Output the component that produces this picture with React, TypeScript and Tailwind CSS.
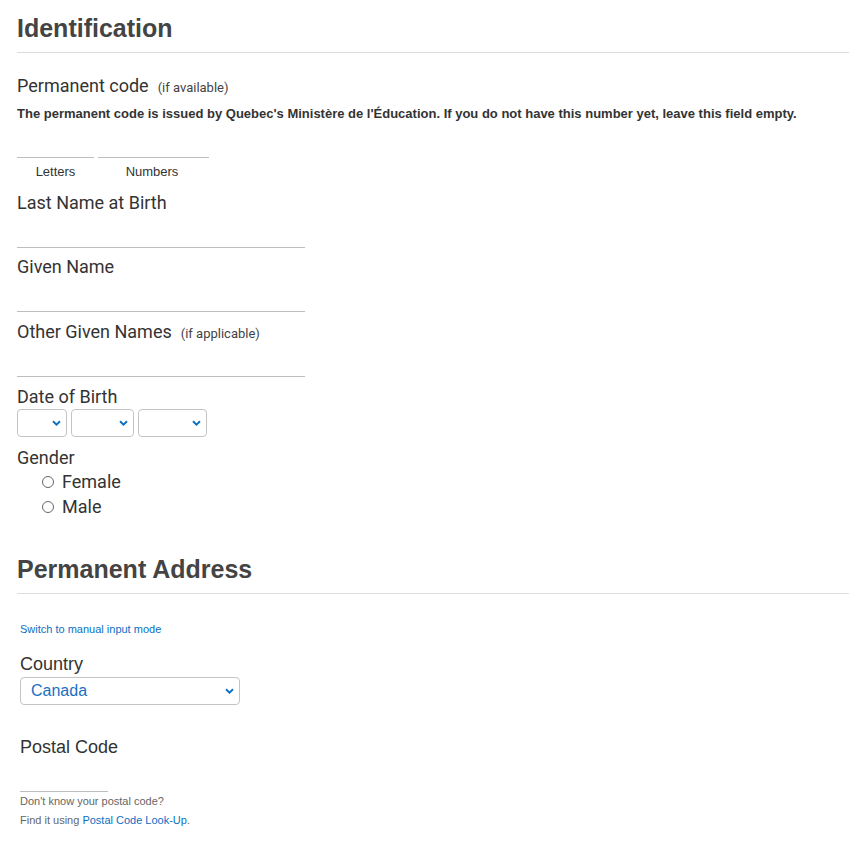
import type { ReactNode } from 'react'

const roboto = "font-['Roboto','Liberation_Sans',sans-serif]"
const arial = "font-['Liberation_Sans',Arial,sans-serif]"

function Chevron() {
    return (
        <svg width="9" height="6" viewBox="0 0 9 6" className="pointer-events-none absolute right-[5px] top-1/2 -translate-y-1/2 mr-[1px]">
            <path d="M1 1.2 L4.5 4.6 L8 1.2" fill="none" stroke="#0b6fc2" strokeWidth="1.9" />
        </svg>
    )
}

function Select({ width, children }: { width: string; children?: ReactNode }) {
    return (
        <div className={`relative ${width} h-[28px]`}>
            <select className="w-full h-full appearance-none bg-white border border-[#c4c4c4] rounded-[4px] outline-none" defaultValue="">
                {children}
            </select>
            <Chevron />
        </div>
    )
}

function Field({ label, note, gap = 'mb-[7px]' }: { label: string; note?: string; gap?: string }) {
    return (
        <div className={gap}>
            <label className={`${roboto} block h-[24px] leading-[24px] text-[18px] text-[#333]`}>
                {label}
                {note && <span className="ml-[9px] text-[13px] text-[#444]">{note}</span>}
            </label>
            <input className="block w-[288px] h-[33px] border-b border-[#bdbdbd] outline-none" />
        </div>
    )
}

function SectionTitle({ children }: { children: ReactNode }) {
    return (
        <div className="border-b border-[#dcdcdc] pb-[9px]">
            <h2 className={`${arial} h-[30px] leading-[30px] text-[25px] font-bold text-[#444]`}>{children}</h2>
        </div>
    )
}

export default function App() {
    return (
        <div className="bg-white min-h-[844px] pl-[17px] pr-[13px] pt-[13px]">
            <SectionTitle>Identification</SectionTitle>

            <div className={`${roboto} mt-[21px] h-[24px] leading-[24px] text-[18px] text-[#333]`}>
                Permanent code
                <span className="ml-[9px] text-[13px] text-[#444]">(if available)</span>
            </div>
            <p className={`${arial} mt-[7px] h-[18px] leading-[18px] text-[13px] font-bold text-[#333]`}>
                The permanent code is issued by Quebec's Ministère de l'Éducation. If you do not have this number yet, leave this field empty.
            </p>

            <div className="flex gap-[4px]">
                <div className="w-[77px]">
                    <input className="block w-full h-[35px] border-b border-[#bdbdbd] outline-none" />
                    <div className={`${arial} mt-[5px] h-[18px] leading-[18px] text-[13px] text-[#333] text-center`}>Letters</div>
                </div>
                <div className="w-[111px]">
                    <input className="block w-full h-[35px] border-b border-[#bdbdbd] outline-none" />
                    <div className={`${arial} mt-[5px] pr-[3px] h-[18px] leading-[18px] text-[13px] text-[#333] text-center`}>Numbers</div>
                </div>
            </div>

            <div className="mt-[10px]">
                <Field label="Last Name at Birth" />
                <Field label="Given Name" gap="mb-[8px]" />
                <Field label="Other Given Names" note="(if applicable)" gap="mb-[8px]" />
            </div>

            <div className={`${roboto} h-[24px] leading-[24px] text-[18px] text-[#333]`}>Date of Birth</div>
            <div className="flex gap-[4px]">
                <Select width="w-[50px]" />
                <Select width="w-[63px]" />
                <Select width="w-[69px]" />
            </div>

            <div className={`${roboto} mt-[9px] h-[23px] leading-[23px] text-[18px] text-[#333]`}>Gender</div>
            <div className={`${roboto} pl-[25px] text-[18px] text-[#333]`}>
                {['Female', 'Male'].map((g) => (
                    <label key={g} className="flex items-center h-[25px] gap-[8px]">
                        <input type="radio" name="gender" className="appearance-none w-[12px] h-[12px] rounded-full border border-[#666] bg-white" />
                        {g}
                    </label>
                ))}
            </div>

            <div className="mt-[35px]">
                <SectionTitle>Permanent Address</SectionTitle>
            </div>

            <div className="pl-[3px]">
                <a href="#" className={`${arial} block mt-[28px] h-[14px] leading-[14px] text-[11px] text-[#0b6fc2]`}>
                    Switch to manual input mode
                </a>

                <div className={`${arial} mt-[16px] h-[24px] leading-[24px] text-[18px] text-[#333]`}>Country</div>
                <div className="relative mt-[1px] w-[220px] h-[28px]">
                    <select className={`${arial} w-full h-full appearance-none bg-white border border-[#c4c4c4] rounded-[4px] pl-[10px] text-[16px] text-[#1a6fc2] outline-none`} defaultValue="CA">
                        <option value="CA">Canada</option>
                    </select>
                    <Chevron />
                </div>

                <div className={`${arial} mt-[30px] h-[24px] leading-[24px] text-[18px] text-[#333]`}>Postal Code</div>
                <input className="block w-[88px] h-[33px] border-b border-[#bdbdbd] outline-none" />
                <div className={`${arial} text-[11px] leading-[19px] text-[#666]`}>
                    <p>Don't know your postal code?</p>
                    <p>
                        Find it using <a href="#" className="text-[#0b6fc2]">Postal Code Look-Up</a>.
                    </p>
                </div>
            </div>
        </div>
    )
}
